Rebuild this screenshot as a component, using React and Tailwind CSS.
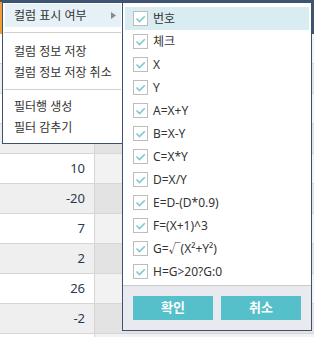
import React from "react";

const rows = ["", "", "", "4", "10", "-20", "7", "2", "26", "-2", ""];

const cols = [
  "번호",
  "체크",
  "X",
  "Y",
  "A=X+Y",
  "B=X-Y",
  "C=X*Y",
  "D=X/Y",
  "E=D-(D*0.9)",
  "F=(X+1)^3",
  "G=√(X²+Y²)",
  "H=G>20?G:0",
];

function Check() {
  return (
    <span className="flex h-[15px] w-[15px] shrink-0 items-center justify-center border border-[#bdbdbd] bg-white">
      <svg width="15" height="15" viewBox="0 0 15 15" className="-m-px">
        <path d="M3.5 7.5 L6.5 10.5 L11.8 5.2" fill="none" stroke="#7ec8cf" strokeWidth="1.6" />
      </svg>
    </span>
  );
}

export default function App() {
  return (
    <div className="relative h-[337px] w-[314px] overflow-hidden bg-white font-['Noto_Sans','Noto_Sans_CJK_KR',sans-serif]">
      {/* grid background */}
      <div className="flex h-[34px] bg-[#3e5572]">
        <div className="mt-[2px] w-[2px] bg-[#f0a030]" />
      </div>
      {rows.map((v, i) => (
        <div
          key={i}
          className={`flex h-[30px] border-b border-[#d6d6d6] ${i % 2 === 0 ? "bg-white" : "bg-[#efefef]"}`}
        >
          <div className="flex w-[95px] items-center justify-end border-r border-[#d6d6d6] pr-[9px] text-[13px] text-[#2b3a4e]">
            {v}
          </div>
          <div className={`flex-1 ${i % 2 === 0 ? "bg-[#f2f2f2]" : "bg-[#e3e3e3]"}`} />
        </div>
      ))}

      {/* main context menu */}
      <div className="absolute left-[2px] top-[2px] h-[142px] w-[121px] border border-[#3d5270] bg-white text-[12px] text-[#333]">
        <div className="pt-[1px]">
          <div className="ml-[2px] mr-[1px] flex h-[23px] items-center justify-between bg-[#e6f0f7] pl-[9px] pr-[5px]">
            <span>컬럼 표시 여부</span>
            <svg width="5" height="7" viewBox="0 0 5 7">
              <path d="M0 0 L5 3.5 L0 7 Z" fill="#8a8a8a" />
            </svg>
          </div>
          <div className="mx-[1px] mb-[8px] mt-[5px] h-px bg-[#d0d0d0]" />
          <div className="flex h-[21px] items-center pl-[11px]">컬럼 정보 저장</div>
          <div className="flex h-[21px] items-center pl-[11px]">컬럼 정보 저장 취소</div>
          <div className="mx-[1px] mb-[6px] mt-[6px] h-px bg-[#d0d0d0]" />
          <div className="flex h-[21px] items-center pl-[11px]">필터행 생성</div>
          <div className="flex h-[21px] items-center pl-[11px]">필터 감추기</div>
        </div>
      </div>

      {/* sub menu */}
      <div className="absolute left-[122px] top-[2px] flex h-[329px] w-[190px] flex-col border border-[#3d5270] bg-white text-[12px] text-[#333]">
        <div className="pt-[4px]">
          {cols.map((c, i) => (
            <div
              key={c}
              className={`mx-[2px] flex h-[23px] items-center gap-[5px] pl-[8px] ${i === 0 ? "bg-[#d9ecf1]" : ""}`}
            >
              <Check />
              <span>{c}</span>
            </div>
          ))}
        </div>
        <div className="mt-[2px] flex flex-1 gap-[8px] border-t border-[#cbcbcb] bg-[#e9eaf0] px-[10px] pt-[10px]">
          <button className="h-[24px] w-[80px] bg-[#55bfca] text-[13px] font-bold text-white">확인</button>
          <button className="h-[24px] w-[80px] bg-[#55bfca] text-[13px] font-bold text-white">취소</button>
        </div>
      </div>
    </div>
  );
}
